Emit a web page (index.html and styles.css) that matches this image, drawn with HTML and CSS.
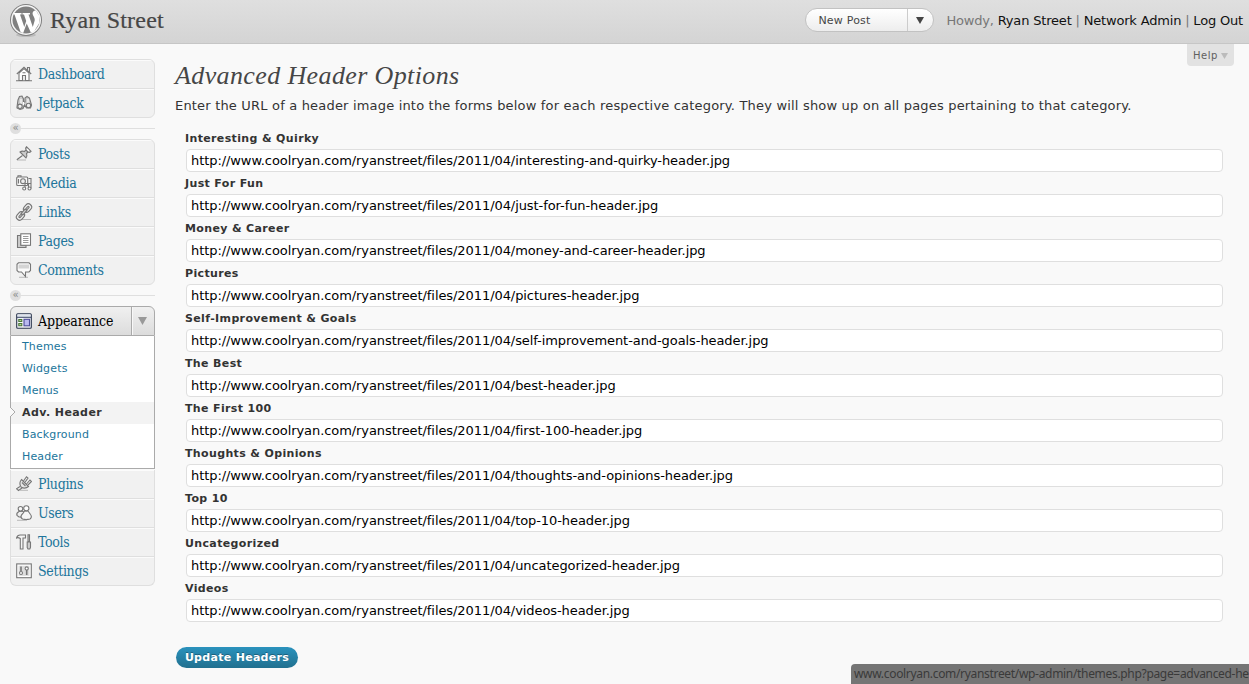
FILE: index.html
```
<!DOCTYPE html>
<html lang="en">
<head>
<meta charset="utf-8">
<title>Advanced Header Options</title>
<link rel="stylesheet" href="styles.css">
</head>
<body>
<header class="topbar">
  <svg class="logo" viewBox="0 0 34 34" width="34" height="34">
    <ellipse cx="17" cy="32" rx="10" ry="2" fill="#bbb"/>
    <circle cx="17" cy="17" r="16" fill="#808080"/>
    <circle cx="17" cy="17" r="15" fill="#f6f6f6"/>
    <circle cx="17" cy="17" r="13.500" fill="#808080"/>
    <path d="M4.500 10H12.500V11.500H11L15.300 24L17.200 18L15 11.500H13.500V10H21V11.500H19.500L23.800 24L25.700 17.500C26.300 14.500 23.300 12.500 23.600 10C24 8 26 7 27.200 8L30.300 13L30.300 20L25 28.500L21.800 29.500L17.700 20.500L14.200 30L11.700 29.300L5.500 11.500H4.500Z" fill="#fff"/>
  </svg>
  <h1 class="site">Ryan Street</h1>
  <div class="newpost"><span class="newpost-label">New Post</span><span class="newpost-arrow"><svg width="8" height="7"><path d="M0 0H8L4 7Z" fill="#444"/></svg></span></div>
  <p class="user"><span class="grey">Howdy, </span>Ryan Street <span class="grey">|</span> Network Admin <span class="grey">|</span> Log Out</p>
</header>
<div class="help">Help <svg width="7" height="6"><path d="M0 0H7L3.500 6Z" fill="#bbb"/></svg></div>
<div class="layout">
  <nav class="side">
    <ul class="menu">
      <li><svg class="icon" viewBox="0 0 16 16"><path d="M3 7V14.500H6.500V9.500H9.500V14.500H13V7L8 2.500Z" fill="#fff"/><path d="M.8 8L8 1.200L15.200 8M11.500 4V1.500H13.500V6M0 14.800H16M6.500 6.800H9.500"/></svg><span>Dashboard</span></li>
      <li><svg class="icon" viewBox="0 0 16 16"><path class="shade" d="M1 12L2 5L3.500 1.500L6 1L7.500 4V7H9V3L11 1.500L13.500 3L15.500 10L14.500 13H10.500L8.500 10L7 13.500L4 14.500L1 13Z"/><path d="M5 4V9M12 4V8M7.500 7V10" stroke="#fff"/><circle cx="4" cy="11.300" r="2.200" fill="#eee"/><circle cx="12.500" cy="10.500" r="2.200" fill="#eee"/></svg><span>Jetpack</span></li>
    </ul>
    <div class="sep"><span>«</span></div>
    <ul class="menu">
      <li><svg class="icon" viewBox="0 0 16 16"><path class="soft" d="M1 14H10"/><path class="shade" d="M4 6Q6 4.500 8.500 5.500L10 4Q9 2 10.500 .8L15 5.300Q13.500 7 12 6L10.500 7.500Q11.500 10 10 12Z"/><path d="M6.500 9.500L.8 13.800M9.800 4L12 6"/><path d="M11 3L13 5" stroke="#fff"/></svg><span>Posts</span></li>
      <li><svg class="icon" viewBox="0 0 16 16"><rect x=".7" y="2" width="11" height="8.500" rx="1" fill="#f8f8f8"/><path d="M2 2V.8H5V2M2.500 4V8.500"/><circle cx="7" cy="6.200" r="2.400" fill="#eee"/><path d="M12.500 3.500H15V13.500M9 13.500V8.500H12V10M12.500 13V8.500H15"/><circle cx="8.200" cy="13.500" r="1.500" fill="#fff"/><circle cx="13.500" cy="13.500" r="1.500" fill="#fff"/></svg><span>Media</span></li>
      <li><svg class="icon link" viewBox="0 0 16 16"><path class="soft" d="M4 15.500H15"/><g transform="rotate(-48 8 8)"><rect x="-1.800" y="4.800" width="9" height="6.400" rx="3.200" fill="#eee"/><rect x=".7" y="7.200" width="4" height="1.600" rx=".8"/><rect x="8.800" y="4.800" width="9" height="6.400" rx="3.200" fill="#eee"/><rect x="11.300" y="7.200" width="4" height="1.600" rx=".8"/><path class="shade" d="M5 6.800H11V9.200H5Z"/></g></svg><span>Links</span></li>
      <li><svg class="icon" viewBox="0 0 16 16"><path class="shade" d="M4.500 2.500H1.500V14.500H10V12H5Z"/><rect x="4.800" y=".8" width="9.700" height="11.500" fill="#fff"/><path d="M7 3.500H12.500M7 5.500H12.500M7 7.500H12.500M7 9.500H12.500" stroke="#999"/></svg><span>Pages</span></li>
      <li><svg class="icon" viewBox="0 0 16 16"><path class="soft" d="M3 15.300H12"/><path d="M2.500 .8H13L14.500 2.300V8.500L13 10H9.500V14.500L5.500 10H2.500L1 8.500V2.300Z" fill="#fafafa"/><path d="M2.500 2.500H13V6.500H2.500Z" fill="#d4d4d4" stroke="none"/></svg><span>Comments</span></li>
    </ul>
    <div class="sep"><span>«</span></div>
    <div class="current"><svg class="icon" viewBox="0 0 16 16"><rect x=".7" y=".7" width="14.600" height="14.600" rx="1" fill="#f4f6fa" stroke="#29344c"/><path d="M1.500 1.500H14.500V3.500H1.500Z" fill="#dfe5ee" stroke="none"/><path d="M1 4.300H15" stroke="#43506d"/><path d="M2.800 6.500H5.800V8.500H2.800ZM2.800 10.500H5.800V12.800H2.800Z" fill="#b2d996" stroke="#4b763a"/><rect x="8" y="6.300" width="5.500" height="6.500" fill="#b9b9f0" stroke="#4c4c98"/></svg><span>Appearance</span><span class="toggle"><svg width="9" height="8"><path d="M0 0H9L4.500 8Z" fill="#999"/></svg></span></div>
    <ul class="submenu">
      <li>Themes</li><li>Widgets</li><li>Menus</li>
      <li class="active">Adv. Header<svg class="notch" width="7" height="10"><path d="M0 0L5 5L0 10" fill="#f9f9f9" stroke="#aaa"/></svg></li>
      <li>Background</li><li>Header</li>
    </ul>
    <ul class="menu tail">
      <li><svg class="icon" viewBox="0 0 16 16"><path class="soft" d="M4 14.300H12"/><path d="M5.500 3.500L12.500 10.500Q9 13.500 5 11Q2.500 7 5.500 3.500Z" fill="#e6e6e6"/><path d="M4 10.500L.5 12.800L2.500 14.500L6 12M7.500 5L10.500 .8L12 2L9 6.300M10.500 8L14 4L15.500 5.500L12 9M6 6.500L9.500 10"/></svg><span>Plugins</span></li>
      <li><svg class="icon wide" viewBox="0 0 16 16"><path d="M3 6.500Q0 8 1 10.500L3 12H6L8 7L6 6Z" fill="#eee"/><circle cx="4.500" cy="3.800" r="2.300" fill="#f8f8f8"/><path d="M8.500 6Q7.500 8 5.500 10Q4 12.500 6.500 14Q10 15 14 14Q16.500 12 14.500 9.500L12 6Z" fill="#f6f6f6"/><circle cx="10.300" cy="3.300" r="2.600" fill="#fff"/><path class="soft" d="M1 15.300H11"/></svg><span>Users</span></li>
      <li><svg class="icon" viewBox="0 0 16 16"><path d="M.5 4Q1.500 1 4 1H9.500V4H7V15H4.300V4.500Q2 3 .5 4Z" fill="#f4f4f4"/><path d="M12 .8H13.500V7.500H12ZM11.200 8H14.500V13.500L13.800 15H12L11.200 13.500Z" fill="#ccc"/></svg><span>Tools</span></li>
      <li><svg class="icon" viewBox="0 0 16 16"><rect x=".7" y=".9" width="14.600" height="13.800" fill="#fff"/><rect x="2.500" y="2.700" width="11" height="10.200" fill="#ddd" stroke="none"/><path d="M5 3.500V8M10.700 7V12" stroke-width="1.600"/><circle cx="5" cy="10" r="1.500" fill="#fff"/><circle cx="10.700" cy="5.500" r="1.600" fill="#fff"/></svg><span>Settings</span></li>
    </ul>
  </nav>
  <main class="main">
    <h2 class="title">Advanced Header Options</h2>
    <p class="intro">Enter the URL of a header image into the forms below for each respective category. They will show up on all pages pertaining to that category.</p>
    <div class="form">
      <div class="row"><b>Interesting &amp; Quirky</b><div class="field">http://www.coolryan.com/ryanstreet/files/2011/04/interesting-and-quirky-header.jpg</div></div>
      <div class="row"><b>Just For Fun</b><div class="field">http://www.coolryan.com/ryanstreet/files/2011/04/just-for-fun-header.jpg</div></div>
      <div class="row"><b>Money &amp; Career</b><div class="field">http://www.coolryan.com/ryanstreet/files/2011/04/money-and-career-header.jpg</div></div>
      <div class="row"><b>Pictures</b><div class="field">http://www.coolryan.com/ryanstreet/files/2011/04/pictures-header.jpg</div></div>
      <div class="row"><b>Self-Improvement &amp; Goals</b><div class="field">http://www.coolryan.com/ryanstreet/files/2011/04/self-improvement-and-goals-header.jpg</div></div>
      <div class="row"><b>The Best</b><div class="field">http://www.coolryan.com/ryanstreet/files/2011/04/best-header.jpg</div></div>
      <div class="row"><b>The First 100</b><div class="field">http://www.coolryan.com/ryanstreet/files/2011/04/first-100-header.jpg</div></div>
      <div class="row"><b>Thoughts &amp; Opinions</b><div class="field">http://www.coolryan.com/ryanstreet/files/2011/04/thoughts-and-opinions-header.jpg</div></div>
      <div class="row"><b>Top 10</b><div class="field">http://www.coolryan.com/ryanstreet/files/2011/04/top-10-header.jpg</div></div>
      <div class="row"><b>Uncategorized</b><div class="field">http://www.coolryan.com/ryanstreet/files/2011/04/uncategorized-header.jpg</div></div>
      <div class="row"><b>Videos</b><div class="field">http://www.coolryan.com/ryanstreet/files/2011/04/videos-header.jpg</div></div>
    </div>
    <button class="update">Update Headers</button>
  </main>
</div>
<div class="status">www.coolryan.com/ryanstreet/wp-admin/themes.php?page=advanced-he</div>
</body>
</html>
```
FILE: styles.css
```
* { box-sizing: border-box; }
body { margin: 0; height: 684px; overflow: hidden; position: relative; background: #f9f9f9; color: #333; font-family: "DejaVu Sans", Verdana, sans-serif; font-size: 13px; }
h1, h2, p, ul { margin: 0; padding: 0; font-weight: normal; }
ul { list-style: none; }
svg { flex: none; }
.topbar { height: 44px; border-bottom: 1px solid #c6c6c6; background: linear-gradient(#dfdfdf, #d4d4d4); display: flex; align-items: center; padding: 0 6px 3px 9px; }
.site { font: 24px/30px "Liberation Serif", serif; letter-spacing: .2px; -webkit-text-stroke: .2px #464646; color: #464646; margin-left: 7px; flex: 1; white-space: nowrap; }
.newpost { width: 129px; height: 24px; border: 1px solid #c2c2c2; border-radius: 12px; background: linear-gradient(#fff, #ededed); display: flex; font-size: 11px; color: #464646; line-height: 23px; margin-right: 12px; }
.newpost-label { flex: 1; padding-left: 12px; letter-spacing: .2px; }
.newpost-arrow { width: 26px; border-left: 1px solid #ccc; display: flex; align-items: center; padding-left: 8px; }
.user { color: #111; white-space: nowrap; letter-spacing: -.18px; }
.grey { color: #777; }
.help { position: absolute; top: 44px; right: 15px; width: 47px; height: 22px; padding-left: 6px; background: #e2e2e2; border-radius: 0 0 4px 4px; color: #606060; font-size: 10px; line-height: 24px; letter-spacing: .5px; white-space: nowrap; }
.layout { display: flex; padding: 15px 26px 0 10px; gap: 20px; }
.side { width: 145px; flex: none; }
.menu { border: 1px solid #dfdfdf; border-radius: 6px; background: #f1f1f1; overflow: hidden; font: 14px/26px "DejaVu Serif Condensed", "DejaVu Serif", serif; font-stretch: condensed; letter-spacing: -.32px; color: #21759b; }
.menu li { height: 29px; display: flex; align-items: center; padding: 0 0 1px 5px; gap: 6px; border-bottom: 1px solid #dfdfdf; border-top: 1px solid #fbfbfb; }
.menu li:last-child { border-bottom: 0; height: 28px; }
.icon { width: 16px; height: 16px; fill: none; stroke: #777; stroke-width: 1.1; }
.link, .wide { overflow: visible; }
.shade { fill: #ccc; }
.soft { stroke: #aaa; stroke-width: .8; }
.sep { height: 21px; display: flex; align-items: center; }
.sep::after { content: ""; height: 1px; background: #dfdfdf; flex: 1; }
.sep span { width: 11px; height: 11px; border-radius: 6px; background: #dfdfdf; color: #888; font-size: 10px; line-height: 9px; text-align: center; }
.current { height: 30px; border: 1px solid #aaa; border-radius: 6px 6px 0 0; background: linear-gradient(#f0f0f0, #dcdcdc); display: flex; align-items: center; padding-left: 5px; gap: 6px; color: #000; font: 14px/28px "DejaVu Serif Condensed", "DejaVu Serif", serif; font-stretch: condensed; letter-spacing: -.1px; }
.toggle { margin-left: auto; width: 23px; height: 28px; border-left: 1px solid #aaa; box-shadow: inset 1px 0 #f8f8f8; display: flex; align-items: center; padding-left: 6px; }
.submenu { border: 1px solid #aaa; border-top: 0; background: #fff; font-size: 11px; line-height: 21px; letter-spacing: .15px; color: #21759b; height: 133px; }
.submenu li { height: 22px; padding-left: 11px; }
.submenu .active { background: #f3f3f3; color: #333; font-weight: bold; letter-spacing: .42px; position: relative; }
.notch { position: absolute; left: -1px; top: 5px; }
.tail { border-top: 0; border-radius: 0 0 6px 6px; margin-top: 1px; }
.main { flex: 1; min-width: 0; }
.title { font: italic 26px/34px "Liberation Serif", serif; letter-spacing: .38px; color: #464646; white-space: nowrap; }
.intro { line-height: 18px; margin-top: 4px; letter-spacing: .185px; white-space: nowrap; }
.form { padding: 15px 0 0 10px; }
.row { height: 45px; display: flex; flex-direction: column; font-size: 11px; }
.row b { height: 19px; line-height: 15px; padding-top: 1px; letter-spacing: .36px; }
.field { height: 23px; margin-left: 1px; border: 1px solid #dfdfdf; border-radius: 4px; background: #fff; color: #000; font-size: 13px; line-height: 21px; letter-spacing: -.075px; padding-left: 4px; white-space: nowrap; }
.update { display: block; margin: 22px 0 0 1px; width: 122px; height: 21px; border: 0; border-radius: 11px; padding: 0; background: linear-gradient(#2a92bd, #21708f); color: #fff; font: bold 11px/20px "DejaVu Sans", sans-serif; letter-spacing: .3px; text-shadow: 0 -1px 0 rgba(0,0,0,.3); }
.status { position: absolute; left: 851px; top: 664px; width: 398px; height: 20px; overflow: hidden; padding-left: 3px; background: #757575; border-radius: 4px 0 0 0; color: #3a3a3a; font: 12px/20px "Noto Sans", sans-serif; letter-spacing: -.32px; white-space: nowrap; }
```
